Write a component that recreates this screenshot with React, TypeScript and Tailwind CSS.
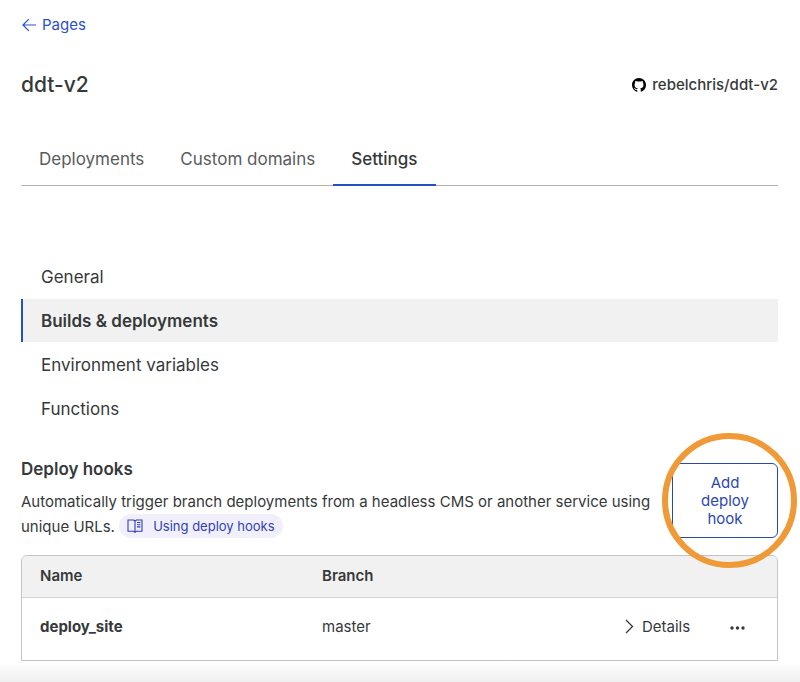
import React, { useState } from "react";

const tabs = ["Deployments", "Custom domains", "Settings"];

const sections = ["General", "Builds & deployments", "Environment variables", "Functions"];

const hooks = [{ name: "deploy_site", branch: "master" }];

function ArrowLeftIcon() {
  return (
    <svg width="15" height="14" viewBox="0 0 15 14" fill="none" stroke="currentColor" strokeWidth="1.2" aria-hidden="true">
      <path d="M15 7H2.2M7.800 1.200L2 7L7.800 12.800" />
    </svg>
  );
}

function GithubIcon() {
  return (
    <svg width="14" height="14" viewBox="0 0 16 16" fill="#000" aria-hidden="true">
      <path d="M8 0C3.58 0 0 3.58 0 8c0 3.54 2.29 6.53 5.47 7.59.4.07.55-.17.55-.38 0-.19-.01-.82-.01-1.49-2.01.37-2.53-.49-2.69-.94-.09-.23-.48-.94-.82-1.13-.28-.15-.68-.52-.01-.53.63-.01 1.08.58 1.23.82.72 1.21 1.87.87 2.33.66.07-.52.28-.87.51-1.07-1.78-.2-3.64-.89-3.64-3.95 0-.87.31-1.59.82-2.15-.08-.2-.36-1.02.08-2.12 0 0 .67-.21 2.2.82.64-.18 1.32-.27 2-.27s1.36.09 2 .27c1.53-1.04 2.2-.82 2.2-.82.44 1.1.16 1.92.08 2.12.51.56.82 1.27.82 2.15 0 3.07-1.87 3.75-3.65 3.95.29.25.54.73.54 1.48 0 1.07-.01 1.93-.01 2.2 0 .21.15.46.55.38A8.01 8.01 0 0 0 16 8c0-4.42-3.58-8-8-8z" />
    </svg>
  );
}

function BookIcon() {
  return (
    <svg width="16" height="14" viewBox="0 0 16 14" fill="none" stroke="currentColor" strokeWidth="1.1" aria-hidden="true">
      <path d="M8 2L6.6 1H1v11.2h5.6L8 13.2l1.4-1H15V1H9.4L8 2zM8 2v11.2" />
      <path d="M10 3.500h3.400M10 5.700h3.400M10 7.900h3.400" />
    </svg>
  );
}

function ChevronIcon() {
  return (
    <svg width="9" height="15" viewBox="0 0 9 15" fill="none" stroke="currentColor" strokeWidth="1.3" aria-hidden="true">
      <path d="M1 1l6.500 6.500L1 14" />
    </svg>
  );
}

function DotsIcon() {
  return (
    <svg width="15" height="4" viewBox="0 0 15 4" fill="currentColor" aria-hidden="true">
      <circle cx="2" cy="2" r="1.700" />
      <circle cx="7.500" cy="2" r="1.700" />
      <circle cx="13" cy="2" r="1.700" />
    </svg>
  );
}

function App() {
  const [tab, setTab] = useState("Settings");
  const [section, setSection] = useState("Builds & deployments");

  return (
    <div className="bg-white text-[#36393a] font-['Inter','Liberation_Sans',sans-serif]">
      <div className="pl-[21px] pr-[22px] pt-3.5">
        <a href="#pages" className="inline-flex items-center gap-1.5 text-[15px] leading-5 text-[#2c50c8]">
          <ArrowLeftIcon />
          Pages
        </a>

        <header className="mt-8 flex h-[30px] items-center justify-between">
          <h1 className="text-[21px] font-medium">ddt-v2</h1>
          <a href="#repo" className="flex items-center gap-1.5 text-[15px] font-medium">
            <GithubIcon />
            rebelchris/ddt-v2
          </a>
        </header>

        <div role="tablist" className="mt-[35px] flex border-b border-[#b0b1b3] text-[17px]">
          {tabs.map((item) => (
            <button
              key={item}
              role="tab"
              aria-selected={item === tab}
              onClick={() => setTab(item)}
              className={`-mb-px h-[51px] cursor-pointer border-b-2 px-[18px] ${
                item === tab ? "border-[#2151c5] font-medium" : "border-transparent text-[#595b5d]"
              }`}
            >
              {item}
            </button>
          ))}
        </div>

        <nav className="mt-[69px] flex flex-col gap-px text-[17px]">
          {sections.map((item) => (
            <a
              key={item}
              href="#section"
              onClick={() => setSection(item)}
              className={`flex h-[43px] items-center border-l-2 px-[18px] pt-0.5 ${
                item === section ? "border-[#2151c5] bg-[#f1f1f1] font-semibold" : "border-transparent"
              }`}
            >
              {item}
            </a>
          ))}
        </nav>

        <section>
          <div className="flex items-end justify-between gap-4">
            <div className="pt-[27px]">
              <h2 className="text-[17px] font-semibold leading-6">Deploy hooks</h2>
              <div className="mt-2 text-[15px] leading-[25px]">
                <span>Automatically trigger branch deployments from a headless CMS or another service using unique URLs.</span>{" "}
                <a
                  href="#docs"
                  className="inline-flex h-6 items-center gap-2.5 rounded-full bg-[#f1effb] px-2 align-top text-[13px] text-[#2f3fb8]"
                >
                  <BookIcon />
                  Using deploy hooks
                </a>
              </div>
            </div>
            <div className="relative mb-px shrink-0">
              <button className="block h-[75px] w-[106px] cursor-pointer rounded-md border border-[#2c48b0] px-6 text-[15px] leading-[18px] text-[#2c48b0]">
                Add deploy hook
              </button>
              <div className="pointer-events-none absolute -left-2.5 -top-[30px] size-[135px] rounded-full border-6 border-[#f09a37]" />
            </div>
          </div>

          <div className="mt-4 overflow-hidden rounded-t-md border border-[#c4c4c5]">
            <table className="w-full table-fixed text-left text-[15px]">
              <thead className="bg-[#f1f1f1]">
                <tr className="h-[41px] border-b border-[#d5d5d6]">
                  <th className="w-[282px] px-[18px] font-semibold">Name</th>
                  <th className="px-[18px] font-semibold">Branch</th>
                  <th className="w-[170px]" />
                </tr>
              </thead>
              <tbody>
                {hooks.map((hook) => (
                  <tr key={hook.name} className="h-[63px]">
                    <td className="px-[18px] pb-1 font-bold">{hook.name}</td>
                    <td className="px-[18px] pb-1">{hook.branch}</td>
                    <td className="pb-1">
                      <div className="flex items-center justify-between pl-[18px] pr-8">
                        <button className="flex cursor-pointer items-center gap-2">
                          <ChevronIcon />
                          Details
                        </button>
                        <button aria-label="More actions" className="cursor-pointer pt-0.5">
                          <DotsIcon />
                        </button>
                      </div>
                    </td>
                  </tr>
                ))}
              </tbody>
            </table>
          </div>
        </section>
      </div>
      <div className="h-[22px] bg-linear-to-b from-white to-[#efefef]" />
    </div>
  );
}

export default App;
